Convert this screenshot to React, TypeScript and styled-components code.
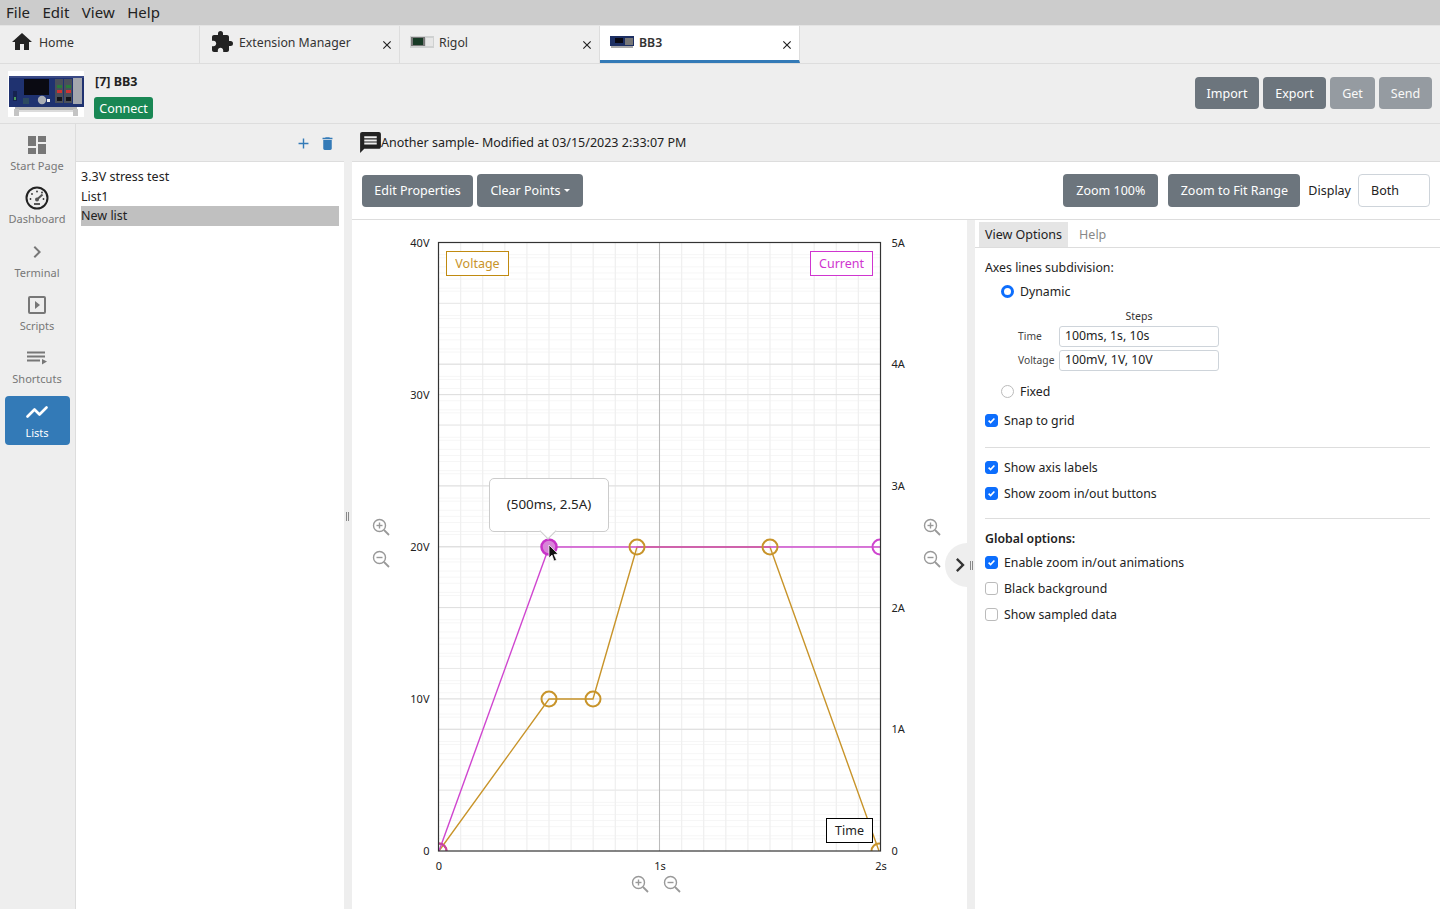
import React from "react";
import styled, { createGlobalStyle } from "styled-components";
import { MdHome, MdExtension, MdDashboard, MdMessage, MdDelete, MdAdd, MdClose, MdChevronRight } from "react-icons/md";

const Global = createGlobalStyle`
  html, body { margin: 0; padding: 0; height: 100%; overflow: hidden; }
  body { font-family: "Noto Sans", "Open Sans", sans-serif; font-size: 13px; color: #212529; background: #fff; }
  #root { height: 100%; }
  * { box-sizing: border-box; }
`;

const Page = styled.div`display: flex; flex-direction: column; width: 1440px; height: 909px; overflow: hidden;`;
const MenuBar = styled.div`display: flex; gap: 12.5px; height: 25px; padding: 0 0 2px 6px; align-items: center; background: #ccc; font-size: 15px; color: #222; flex: none;`;
const TabBar = styled.div`display: flex; height: 39px; flex: none; background: #eee; border-top: 1px solid #e4e4e4; border-bottom: 1px solid #ddd;`;
const Tab = styled.div<{ $active?: boolean }>`
  position: relative; display: flex; align-items: center; gap: 5px; width: 200px; height: 37px;
  padding: 0 10px 5px 10px; background: ${p => p.$active ? "#fff" : "#eee"}; border-right: 1px solid #ddd;
  border-bottom: ${p => p.$active ? "3px solid #337ab7" : "none"};
  font-weight: ${p => p.$active ? 600 : 400}; font-size: 12.3px; color: #333; padding-bottom: ${p => p.$active ? "2px" : "5px"};
`;
const TabClose = styled.span`position: absolute; right: 5px; top: 12px; display: flex; color: #222; font-size: 14px;`;
const Head = styled.div`display: flex; height: 60px; flex: none; align-items: center; background: #eee; border-bottom: 1px solid #ddd; padding: 0 8px;`;
const Thumb = styled.div`width: 76px; height: 46px; flex: none;`;
const HeadInfo = styled.div`display: flex; flex-direction: column; align-items: flex-start; margin: 5px 0 0 10px; gap: 7px;`;
const DevName = styled.div`font-weight: 700; font-size: 12.5px; color: #222; padding-left: 1px; line-height: 17px;`;
const Connect = styled.button`height: 22px; width: 59px; padding: 0; border: none; border-radius: 3px; background: #198754; color: #fff; font: inherit; font-size: 12.5px;`;
const Spacer = styled.div`flex: 1;`;
const Btn = styled.button<{ $w: number; $h?: number; $off?: boolean }>`
  display: flex; align-items: center; justify-content: center; gap: 3px;
  width: ${p => p.$w}px; height: ${p => p.$h ?? 32}px; flex: none; padding: 0; border: none; border-radius: 4px;
  background: #6c757d; color: #fff; font: inherit; font-size: 12.5px; opacity: ${p => p.$off ? 0.68 : 1};
`;
const Caret = styled.span`width: 0; height: 0; border-left: 3.5px solid transparent; border-right: 3.5px solid transparent; border-top: 3.5px solid #fff;`;
const HeadBtns = styled.div`display: flex; gap: 4px; margin-top: -1px;`;
const Body = styled.div`display: flex; flex: 1; min-height: 0;`;
const Nav = styled.div`width: 76px; flex: none; background: #eee; border-right: 1px solid #ddd; padding: 3px 5px 0; display: flex; flex-direction: column;`;
const NavItem = styled.div<{ $active?: boolean; $h: number }>`
  height: ${p => p.$h}px; flex: none; display: flex; flex-direction: column; align-items: center; justify-content: flex-start;
  padding: ${p => p.$active ? "2px" : "4px"} 1px 0 0; border-radius: 4px; font-size: 11px; line-height: 14px;
  background: ${p => p.$active ? "#337ab7" : "transparent"}; color: ${p => p.$active ? "#fff" : "#777"};
`;
const NavIcon = styled.div<{ $c?: string }>`height: 27px; display: flex; align-items: center; justify-content: center; color: ${p => p.$c ?? "#777"}; margin-bottom: 1px;`;
const ListPanel = styled.div`width: 268px; flex: none; display: flex; flex-direction: column;`;
const StripRight = styled.div`height: 38px; flex: none; display: flex; justify-content: flex-end; align-items: center; gap: 7px; padding: 2px 8px 0 0; background: #eee; border-bottom: 1px solid #ddd; color: #337ab7;`;
const ListRows = styled.div`padding: 5px 5px 0; flex: 1;`;
const ListRow = styled.div<{ $sel?: boolean }>`height: 19.5px; line-height: 19.5px; font-size: 12.5px; background: ${p => p.$sel ? "#c0c0c0" : "transparent"}; color: #222;`;
const Splitter = styled.div`position: relative; width: 8px; flex: none; background: #eee;`;
const Grip = styled.div<{ $top: number; $l: number }>`position: absolute; top: ${p => p.$top}px; left: ${p => p.$l}px; width: 3px; height: 9px; border-left: 1px solid #888; border-right: 1px solid #888;`;
const Main = styled.div`flex: 1; display: flex; flex-direction: column; min-width: 0;`;
const Note = styled.div`height: 38px; flex: none; display: flex; align-items: center; background: #eee; border-bottom: 1px solid #ddd; padding: 0 0 0 6px; font-size: 12.5px; color: #222;`;
const Toolbar = styled.div`height: 58px; flex: none; display: flex; align-items: center; padding: 0 10px; border-bottom: 1px solid #ddd;`;
const BtnGap = styled.div<{ $w: number }>`width: ${p => p.$w}px; flex: none;`;
const DisplayLabel = styled.span`font-size: 12.5px; color: #222; margin: 0 7px 0 8px;`;
const Select = styled.div`width: 72px; height: 33px; border: 1px solid #ced4da; border-radius: 4px; padding: 0 12px; line-height: 31px; font-size: 12.5px; color: #222;`;
const Content = styled.div`flex: 1; display: flex; min-height: 0;`;
const ChartArea = styled.div`position: relative; width: 615px; flex: none;`;
const Tooltip = styled.div`
  position: absolute; left: 137px; top: 258px; width: 120px; height: 54px; background: #fff; border: 1px solid #ccc; border-radius: 5px;
  display: flex; align-items: center; justify-content: center; padding-bottom: 2px; font-size: 13.4px; color: #222;
  &::after { content: ""; position: absolute; left: 52px; bottom: -6px; width: 11px; height: 11px; background: #fff; border-right: 1px solid #ccc; border-bottom: 1px solid #ccc; transform: rotate(45deg); }
`;
const Legend = styled.div<{ $l: number; $t: number; $w: number; $h: number; $c: string; $tc?: string }>`
  position: absolute; left: ${p => p.$l}px; top: ${p => p.$t}px; width: ${p => p.$w}px; height: ${p => p.$h}px;
  border: 1px solid ${p => p.$c}; color: ${p => p.$tc ?? p.$c}; background: #fff; display: flex; align-items: center; justify-content: center; font-size: 12.5px;
`;
const Collapse = styled.div`
  position: absolute; left: 593px; top: 323px; width: 44px; height: 44px; border-radius: 50%; background: #eee; color: #333;
  display: flex; align-items: center; padding-left: 1px; clip-path: inset(0 22px 0 0); font-size: 28px;
`;
const CollapseIcon = styled.span`display: flex;`;
const Side = styled.div`flex: 1; display: flex; flex-direction: column; min-width: 0; padding-top: 2px;`;
const SideTabs = styled.div`height: 26px; flex: none; display: flex; padding-left: 4px; border-bottom: 1px solid #ddd; font-size: 12.5px;`;
const SideTab = styled.div<{ $active?: boolean }>`
  height: 25px; padding: 0 ${p => p.$active ? "6px" : "11px"}; line-height: 25px; background: ${p => p.$active ? "#e5e5e5" : "transparent"}; color: ${p => p.$active ? "#222" : "#888"};
`;
const SideBody = styled.div`padding: 11px 10px 0; font-size: 12.3px; color: #222;`;
const Line = styled.div<{ $h?: number; $indent?: number; $bold?: boolean; $mt?: number; $mb?: number }>`
  display: flex; align-items: center; height: ${p => p.$h ?? 26}px; padding-left: ${p => p.$indent ?? 0}px; font-weight: ${p => p.$bold ? 600 : 400};
  margin: ${p => p.$mt ?? 0}px 0 ${p => p.$mb ?? 0}px;
`;
const Radio = styled.span<{ $on?: boolean }>`
  width: 13px; height: 13px; flex: none; margin-right: 6px; border-radius: 50%; background: #fff;
  border: ${p => p.$on ? "3.5px solid #0d6efd" : "1px solid #bbb"};
`;
const Check = styled.span<{ $on?: boolean }>`
  width: 13px; height: 13px; flex: none; margin-right: 6px; border-radius: 3px; background: ${p => p.$on ? "#0d6efd" : "#fff"};
  border: 1px solid ${p => p.$on ? "#0d6efd" : "#bbb"}; display: flex; align-items: center; justify-content: center;
`;
const Steps = styled.div`width: 234px; text-align: center; padding-left: 74px; font-size: 10.5px; line-height: 14px; height: 15px; color: #333;`;
const StepRow = styled.div`display: flex; align-items: center; height: 24px; padding-left: 33px; font-size: 10.3px; color: #444;`;
const StepLabel = styled.span`width: 41px; flex: none;`;
const StepInput = styled.div`width: 160px; height: 21px; border: 1px solid #ced4da; border-radius: 3px; padding: 0 5px; line-height: 18px; font-size: 12.3px; color: #222;`;
const Rule = styled.div<{ $mt: number; $mb: number }>`height: 1px; background: #ddd; margin: ${p => p.$mt}px 0 ${p => p.$mb}px;`;

const BB3Thumb = () => (
  <svg width="100%" height="100%" viewBox="0 0 76 46">
    <rect width="76" height="46" fill="#fff" />
    <rect x="1" y="5" width="75" height="31" fill="#1f3270" />
    <rect x="1" y="5" width="75" height="2" fill="#3a4a85" />
    <rect x="5" y="20" width="4" height="10" fill="#16234f" />
    <rect x="6" y="26" width="2" height="3" fill="#4a9a5a" />
    <rect x="16" y="8" width="25" height="16" fill="#0a0a12" />
    <rect x="15" y="27" width="6" height="6" fill="#2d4a60" />
    <circle cx="34" cy="29" r="4.2" fill="#a9adb5" />
    <rect x="39" y="28" width="3" height="3" fill="#eee" />
    <rect x="47" y="8" width="8" height="24" fill="#4a4f5a" />
    <rect x="56" y="8" width="8" height="24" fill="#4a4f5a" />
    <rect x="65" y="7" width="9" height="26" fill="#a4a7ae" />
    <rect x="49" y="19" width="5" height="3" fill="#c33" />
    <rect x="58" y="19" width="5" height="3" fill="#c33" />
    <rect x="49" y="14" width="5" height="3" fill="#2a7a3a" />
    <rect x="58" y="14" width="5" height="3" fill="#2a7a3a" />
    <rect x="49" y="26" width="5" height="4" fill="#15151a" />
    <rect x="58" y="26" width="5" height="4" fill="#15151a" />
    <rect x="7" y="36" width="62" height="3" fill="#b5b5b5" />
    <rect x="7" y="39" width="62" height="2" fill="#dcdcdc" />
    <rect x="6" y="38" width="5" height="7" fill="#c4c4c4" />
    <rect x="65" y="38" width="5" height="7" fill="#c4c4c4" />
  </svg>
);
const SmallBB3 = () => (
  <svg width="24" height="14" viewBox="0 0 24 14">
    <rect y="1" width="24" height="10" fill="#1d2f63" />
    <rect x="5" y="3" width="8" height="5" fill="#080812" />
    <rect x="15" y="3" width="8" height="7" fill="#777" />
    <rect x="1" y="11" width="22" height="2" fill="#aaa" />
  </svg>
);
const SmallRigol = () => (
  <svg width="24" height="12" viewBox="0 0 24 12">
    <rect width="24" height="12" fill="#cfd1d1" />
    <rect x="1" y="1" width="14" height="9" fill="#777" />
    <rect x="3" y="2" width="10" height="7" fill="#173a25" />
    <rect x="16" y="2" width="7" height="8" fill="#e6e6e6" />
  </svg>
);
const GaugeIcon = () => (
  <svg width="24" height="24" viewBox="0 0 24 24" fill="none">
    <circle cx="12" cy="12" r="10.5" stroke="#222" strokeWidth="2" />
    <path d="M12 13.5 L17.5 8.5" stroke="#555" strokeWidth="2" />
    <circle cx="12" cy="13.5" r="2" fill="#555" />
    <g fill="#333">
      <circle cx="5.5" cy="13" r=".9" /><circle cx="7" cy="8" r=".9" /><circle cx="12" cy="5.5" r=".9" /><circle cx="17" cy="6.5" r=".9" /><circle cx="18.5" cy="13" r=".9" /><rect x="9" y="17.2" width="6" height="1.6" />
    </g>
  </svg>
);
const ScriptIcon = () => (
  <svg width="18" height="18" viewBox="0 0 18 18" fill="none">
    <rect x="1" y="1" width="16" height="16" rx="1" stroke="#777" strokeWidth="2" />
    <path d="M7 5 L12 9 L7 13 Z" fill="#777" />
  </svg>
);
const ShortcutIcon = () => (
  <svg width="20" height="14" viewBox="0 0 20 14" fill="#777">
    <rect x="0" y="0.5" width="18" height="2" />
    <rect x="0" y="4.5" width="18" height="2" />
    <rect x="0" y="8.5" width="13" height="2" />
    <path d="M15 8 L20 10.5 L15 13.5 Z" />
  </svg>
);
const ListsIcon = () => (
  <svg width="22" height="14" viewBox="0 0 22 14" fill="none">
    <polyline points="1.5,11.5 8.5,4.5 13.5,9.5 20.5,2.5" stroke="#fff" strokeWidth="2.6" strokeLinecap="round" strokeLinejoin="round" />
  </svg>
);
const CheckMark = () => (
  <svg width="9" height="9" viewBox="0 0 10 10" fill="none"><path d="M1.8 5.2 L4 7.4 L8.2 2.8" stroke="#fff" strokeWidth="1.8" /></svg>
);

const Magnifier = ({ x, y, plus }: { x: number; y: number; plus?: boolean }) => (
  <g transform={`translate(${x} ${y})`} fill="none" stroke="#999" strokeWidth="1.4">
    <circle cx="6.5" cy="6.5" r="6" />
    <path d="M11 11 L16 16" strokeWidth="1.8" />
    <path d="M3.5 6.5 H9.5" />
    {plus && <path d="M6.5 3.5 V9.5" />}
  </g>
);

const L = 438.5, R = 880.5, T = 242.5, B = 851;
const range = (n: number) => Array.from({ length: n }, (_, i) => i);
const AxisText = styled.text`font-family: "Noto Sans", sans-serif; font-size: 11px; fill: #222;`;

const Chart = () => {
  const xMinor = range(19).map(i => L + (R - L) * (i + 1) / 20);
  const vMinor = range(39).map(i => B - (B - T) * (i + 1) / 40);
  const aMinor = range(49).map(i => B - (B - T) * (i + 1) / 50);
  const mid = [0.5, 1.5, 2.5, 3.5, 4.5].map(v => B - (B - T) * v / 5);
  const vMajor = [10, 20, 30].map(v => B - (B - T) * v / 40);
  const aMajor = [1, 2, 3, 4].map(v => B - (B - T) * v / 5);
  const gold = "#c8942a";
  const mag = "#cf45cf";
  return (
    <svg width="615" height="689" viewBox="352 220 615 689" style={{ display: "block" }}>
      <defs><clipPath id="plot"><rect x={L} y={T} width={R - L} height={B - T} /></clipPath></defs>
      {vMinor.map(y => <line key={"v" + y} x1={L} x2={R} y1={y} y2={y} stroke="#f6f6f6" />)}
      {aMinor.map(y => <line key={"a" + y} x1={L} x2={R} y1={y} y2={y} stroke="#f6f6f6" />)}
      {xMinor.map(x => <line key={"x" + x} y1={T} y2={B} x1={x} x2={x} stroke="#f0f0f0" strokeWidth="1.3" />)}
      {mid.map(y => <line key={"m" + y} x1={L} x2={R} y1={y} y2={y} stroke="#e8e8e8" />)}
      {vMajor.map(y => <line key={"V" + y} x1={L} x2={R} y1={y} y2={y} stroke="#ddd" />)}
      {aMajor.map(y => <line key={"A" + y} x1={L} x2={R} y1={y} y2={y} stroke="#ddd" />)}
      <line x1="659.5" x2="659.5" y1={T} y2={B} stroke="#bbb" />
      <g clipPath="url(#plot)" fill="none">
        <polyline points="439,851 549,699 593,699 637,547 770,547 879,851" stroke={gold} strokeWidth="1.4" />
        <polyline points="439,851 549,547" stroke={mag} strokeWidth="1.4" />
        <line x1="549" x2="881" y1="547" y2="547" stroke={mag} strokeWidth="1.8" opacity=".7" />
        {[[549, 699], [593, 699], [637, 547], [770, 547], [879, 851], [439, 851]].map(([x, y]) => (
          <circle key={x} cx={x} cy={y} r="7.5" stroke={gold} strokeWidth="2" fill="none" />
        ))}
        <circle cx="439" cy="851" r="7.5" stroke="#c93fa8" strokeWidth="2" />
        <circle cx="880" cy="547" r="7.5" stroke={mag} strokeWidth="2" />
        <circle cx="549" cy="547" r="7.5" stroke="#c832c8" strokeWidth="2.5" fill="#d885d8" />
      </g>
      <rect x={L} y={T} width={R - L} height={B - T} fill="none" stroke="#333" strokeWidth="1.2" />
      <path d="M549 545 V558 L552 555 L554 561 L556.5 560 L554 554.5 L558 554 Z" fill="#111" stroke="#fff" strokeWidth=".7" />
      {[["40V", 247], ["30V", 399], ["20V", 551], ["10V", 703], ["0", 855]].map(([t, y]) => (
        <AxisText key={t} x="429.5" y={y} textAnchor="end">{t}</AxisText>
      ))}
      {[["5A", 247], ["4A", 368], ["3A", 490], ["2A", 612], ["1A", 733], ["0", 855]].map(([t, y]) => (
        <AxisText key={t} x="891.5" y={y}>{t}</AxisText>
      ))}
      <AxisText x="439" y="870" textAnchor="middle">0</AxisText>
      <AxisText x="660" y="870" textAnchor="middle">1s</AxisText>
      <AxisText x="881" y="870" textAnchor="middle">2s</AxisText>
      <Magnifier x={373} y={519} plus />
      <Magnifier x={373} y={551} />
      <Magnifier x={924} y={519} plus />
      <Magnifier x={924} y={551} />
      <Magnifier x={632} y={876} plus />
      <Magnifier x={664} y={876} />
    </svg>
  );
};

export default function App() {
  return (
    <Page>
      <Global />
      <MenuBar><span>File</span><span>Edit</span><span>View</span><span>Help</span></MenuBar>
      <TabBar>
        <Tab><MdHome size={24} color="#222" />Home</Tab>
        <Tab><MdExtension size={24} color="#222" />Extension Manager<TabClose><MdClose /></TabClose></Tab>
        <Tab><SmallRigol />Rigol<TabClose><MdClose /></TabClose></Tab>
        <Tab $active><SmallBB3 />BB3<TabClose><MdClose /></TabClose></Tab>
      </TabBar>
      <Head>
        <Thumb><BB3Thumb /></Thumb>
        <HeadInfo>
          <DevName>[7] BB3</DevName>
          <Connect>Connect</Connect>
        </HeadInfo>
        <Spacer />
        <HeadBtns>
          <Btn $w={64}>Import</Btn>
          <Btn $w={63}>Export</Btn>
          <Btn $w={45} $off>Get</Btn>
          <Btn $w={53} $off>Send</Btn>
        </HeadBtns>
      </Head>
      <Body>
        <Nav>
          <NavItem $h={53}><NavIcon><MdDashboard size={24} /></NavIcon>Start Page</NavItem>
          <NavItem $h={54}><NavIcon><GaugeIcon /></NavIcon>Dashboard</NavItem>
          <NavItem $h={53}><NavIcon><MdChevronRight size={24} /></NavIcon>Terminal</NavItem>
          <NavItem $h={53}><NavIcon><ScriptIcon /></NavIcon>Scripts</NavItem>
          <NavItem $h={56}><NavIcon><ShortcutIcon /></NavIcon>Shortcuts</NavItem>
          <NavItem $h={49} $active><NavIcon $c="#fff"><ListsIcon /></NavIcon>Lists</NavItem>
        </Nav>
        <ListPanel>
          <StripRight><MdAdd size={17} /><MdDelete size={17} /></StripRight>
          <ListRows>
            <ListRow>3.3V stress test</ListRow>
            <ListRow>List1</ListRow>
            <ListRow $sel>New list</ListRow>
          </ListRows>
        </ListPanel>
        <Splitter><Grip $top={388} $l={2} /></Splitter>
        <Main>
          <Note><MdMessage size={25} color="#222" style={{ marginRight: -2 }} />Another sample- Modified at 03/15/2023 2:33:07 PM</Note>
          <Toolbar>
            <Btn $w={111}>Edit Properties</Btn>
            <BtnGap $w={4} />
            <Btn $w={106} $h={33}>Clear Points<Caret /></Btn>
            <Spacer />
            <Btn $w={95} $h={33}>Zoom 100%</Btn>
            <BtnGap $w={10} />
            <Btn $w={132} $h={33}>Zoom to Fit Range</Btn>
            <DisplayLabel>Display</DisplayLabel>
            <Select>Both</Select>
          </Toolbar>
          <Content>
            <ChartArea>
              <Chart />
              <Legend $l={94} $t={31} $w={63} $h={25} $c="#c08a10" $tc="#c8942a">Voltage</Legend>
              <Legend $l={458} $t={31} $w={63} $h={25} $c="#cf35cf">Current</Legend>
              <Legend $l={474} $t={598} $w={47} $h={25} $c="#000" $tc="#222">Time</Legend>
              <Tooltip>(500ms, 2.5A)</Tooltip>
              <Collapse><CollapseIcon><MdChevronRight /></CollapseIcon></Collapse>
            </ChartArea>
            <Splitter><Grip $top={341} $l={3} /></Splitter>
            <Side>
              <SideTabs><SideTab $active>View Options</SideTab><SideTab>Help</SideTab></SideTabs>
              <SideBody>
                <Line $h={17}>Axes lines subdivision:</Line>
                <Line $indent={16} $h={30} $mb={3}><Radio $on />Dynamic</Line>
                <Steps>Steps</Steps>
                <StepRow><StepLabel>Time</StepLabel><StepInput>100ms, 1s, 10s</StepInput></StepRow>
                <StepRow><StepLabel>Voltage</StepLabel><StepInput>100mV, 1V, 10V</StepInput></StepRow>
                <Line $indent={16} $h={30} $mt={4}><Radio />Fixed</Line>
                <Line $h={28}><Check $on><CheckMark /></Check>Snap to grid</Line>
                <Rule $mt={13} $mb={6} />
                <Line><Check $on><CheckMark /></Check>Show axis labels</Line>
                <Line><Check $on><CheckMark /></Check>Show zoom in/out buttons</Line>
                <Rule $mt={12} $mb={10} />
                <Line $h={19} $bold>Global options:</Line>
                <Line $mt={1}><Check $on><CheckMark /></Check>Enable zoom in/out animations</Line>
                <Line><Check />Black background</Line>
                <Line><Check />Show sampled data</Line>
              </SideBody>
            </Side>
          </Content>
        </Main>
      </Body>
    </Page>
  );
}
